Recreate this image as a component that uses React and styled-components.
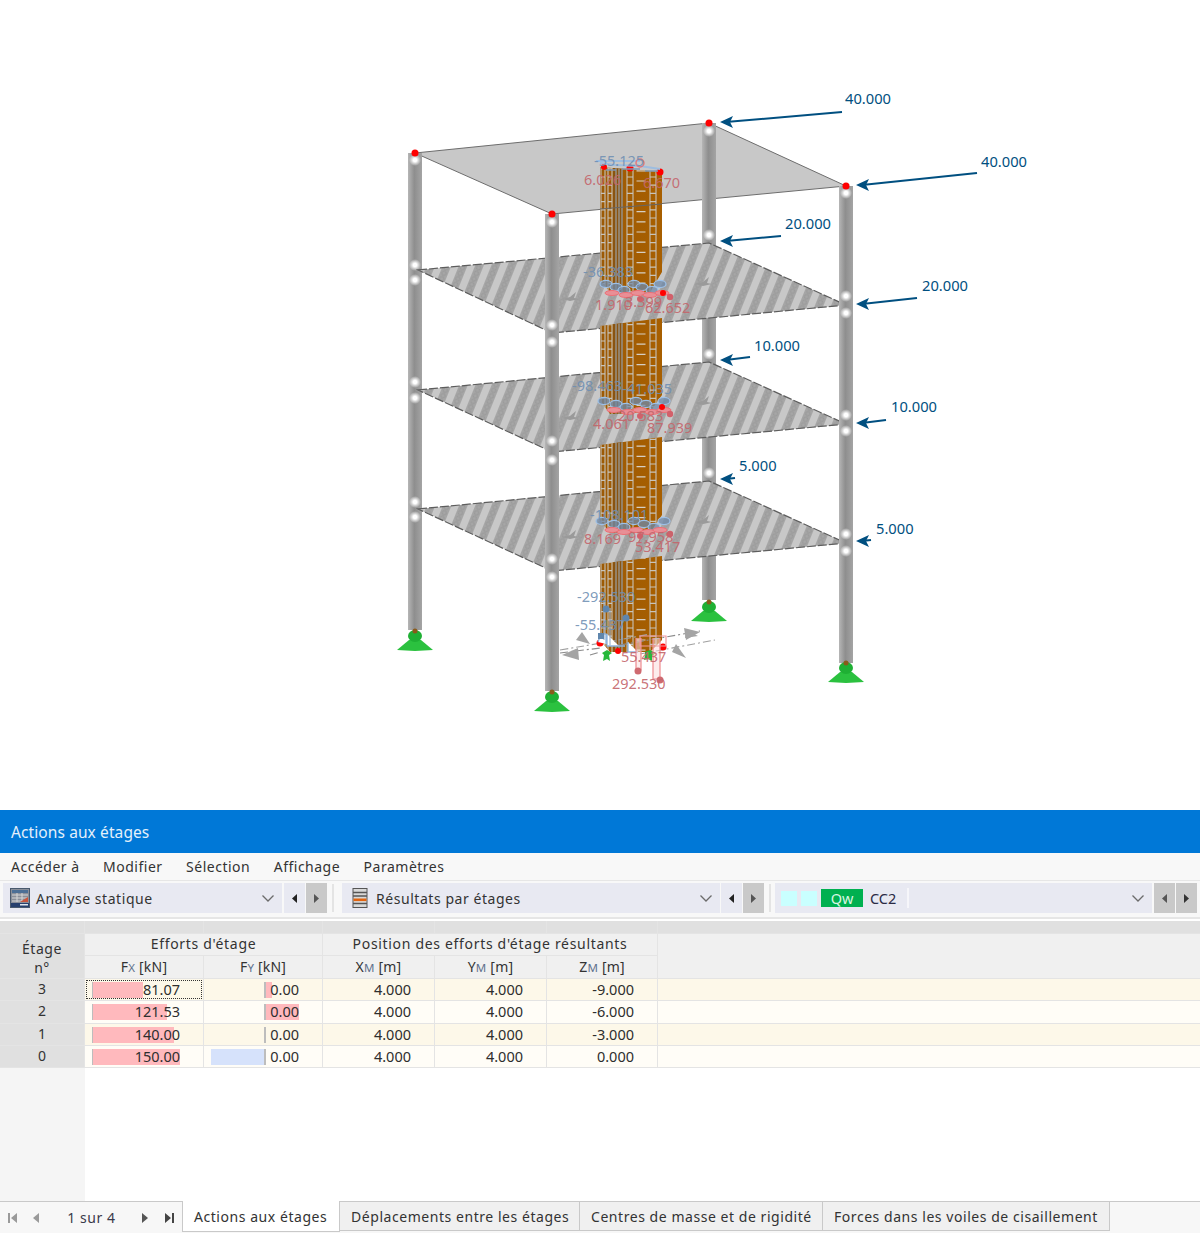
import React from 'react';
import styled, { createGlobalStyle } from 'styled-components';

const Global = createGlobalStyle`
  html, body { margin: 0; padding: 0; background: #fff; }
  #root { width: 1200px; }
`;

const UI = `"Noto Sans", "Open Sans", sans-serif`;

const Page = styled.div`
  width: 1200px; height: 1233px; display: flex; flex-direction: column; overflow: hidden;
  font-family: ${UI}; font-size: 14px; color: #333; background: #fff; letter-spacing: 0.55px;
`;
const Viewport = styled.div` height: 810px; flex: none; letter-spacing: 0; `;
const Drawing = styled.svg` display: block; `;

const TitleBar = styled.div`
  height: 43px; flex: none; background: #0078d7; color: #e4f0fb; display: flex; align-items: center;
  padding-left: 11px; font-size: 15.5px; letter-spacing: 0.1px; box-sizing: border-box;
`;
const MenuBar = styled.div`
  height: 28px; flex: none; background: #f8f8f8; display: flex; align-items: center; gap: 23.5px;
  padding-left: 11px; font-size: 14px; color: #333; border-bottom: 1px solid #e6e6e6; box-sizing: border-box;
  letter-spacing: 0.5px;
`;
const Toolbar = styled.div`
  height: 38px; flex: none; background: #f8f8f8; display: flex; align-items: center; padding: 0 3px 2px 3px;
  box-sizing: border-box; border-bottom: 2px solid #e6e6e6;
`;
const Combo = styled.div`
  width: ${p => p.$w}px; height: 30px; background: #e8e9f2; display: flex; align-items: center;
  padding: 0 7px 0 ${p => p.$pl}px; box-sizing: border-box; gap: ${p => p.$gap}px; flex: none; font-size: 14px;
`;
const ComboLabel = styled.span` flex: 1; white-space: nowrap; `;
const StepButton = styled.div`
  width: 21px; height: 30px; margin-left: ${p => p.$ml}px; background: ${p => (p.$dim ? '#c9c9c9' : '#e8e9f2')};
  display: flex; align-items: center; justify-content: center; flex: none;
`;
const ToolSep = styled.div`
  width: 2px; height: 28px; background: #e4e4e4; margin: 0 ${p => p.$mr}px 0 ${p => p.$ml}px; flex: none;
`;
const Swatch = styled.span` width: 16px; height: 15px; background: #c9ffff; flex: none; `;
const LoadTag = styled.span`
  width: 42px; height: 18px; background: #00b050; color: #d9f6e2; display: flex; align-items: center;
  justify-content: center; font-size: 14.5px; flex: none; letter-spacing: 0;
`;
const LoadCode = styled.span` margin-left: 3px; width: 33px; flex: none; font-size: 14.5px; color: #2b2b45; letter-spacing: 0; `;
const InnerSep = styled.span` width: 2px; height: 20px; background: #f6f6fa; flex: none; `;
const Spacer = styled.span` flex: 1; `;

const TableArea = styled.div`
  flex: 1; display: flex; flex-direction: column; min-height: 0; background: #fff; padding-top: 2px; box-sizing: border-box;
`;
const Grid = styled.div`
  display: grid; flex: none;
  grid-template-columns: 84px 118px 118px 111px 111px 110px 1fr;
  grid-template-rows: 12px 21px 22px repeat(4, 21.33px);
  gap: 1px; background: #e4e4e4; padding-bottom: 1px;
`;
const Strip = styled.div` background: #e0e0e0; `;
const StageHead = styled.div`
  grid-row: span 2; background: #e0e0e0; display: flex; flex-direction: column; align-items: center; justify-content: center;
  line-height: 19px; padding-top: 3px; box-sizing: border-box;
`;
const GroupHead = styled.div`
  grid-column: span ${p => p.$span}; background: #f0f0f0; text-align: center; line-height: 20px; white-space: nowrap; letter-spacing: 0.68px;
`;
const BlankHead = styled.div` grid-row: span 2; background: #f0f0f0; `;
const SubHead = styled.div` background: #f0f0f0; text-align: center; line-height: 22px; white-space: nowrap; letter-spacing: 0.2px; `;
const Sub = styled.span` font-size: 11.5px; color: #5c6f8c; `;
const RowHead = styled.div` background: #e0e0e0; text-align: center; line-height: 20px; letter-spacing: 0; `;
const Cell = styled.div`
  position: relative; background: ${p => (p.$alt ? '#fdf8e9' : '#fffdf7')}; text-align: right; letter-spacing: 0;
  padding-right: 23px; line-height: 21px; color: #2e2e2e; font-size: 14.5px;
  ${p => p.$focus && 'outline: 1.5px dotted #333; outline-offset: -2px;'}
`;
const CellValue = styled.span` position: relative; `;
const Bar = styled.span`
  position: absolute; top: 3px; height: 16px; background: ${p => p.$color};
`;
const BarAxis = styled.span`
  position: absolute; top: 3px; height: 16px; width: 1.5px; background: #bdbdbd;
`;
const Fill = styled.div` flex: 1; display: flex; `;
const FillLeft = styled.div` width: 85px; background: #f5f5f5; `;

const TabBar = styled.div`
  height: 32px; flex: none; display: flex; background: #f7f7f7; border-top: 1px solid #c9c9c9; box-sizing: border-box;
  position: relative;
`;
const Pager = styled.div`
  width: 182px; flex: none; display: flex; align-items: center; padding-left: 7px; box-sizing: border-box; font-size: 14px;
`;
const PagerText = styled.span` width: 103px; text-align: center; margin: 0 -2px 0 0; color: #3a3a4a; `;
const PagerIcon = styled.svg` flex: none; margin-right: ${p => p.$mr || 0}px; `;
const Tab = styled.div`
  height: ${p => (p.$active ? 31 : 29)}px; box-sizing: border-box; padding: 0 11px; white-space: nowrap;
  background: ${p => (p.$active ? '#fff' : '#f0f0f0')}; display: flex; align-items: center;
  border-right: 1px solid #c9c9c9; border-bottom: 1px solid #c9c9c9;
  ${p => p.$active && 'border-left: 1px solid #c9c9c9; margin-top: -1px;'}
  width: ${p => p.$w}px; font-size: 14px; flex: none;
`;

const Chevron = () => (
  <svg width="14" height="9" viewBox="0 0 14 9"><path d="M1.5 1.5 L7 7 L12.5 1.5" fill="none" stroke="#6b6b6b" strokeWidth="1.3" /></svg>
);
const Tri = ({ right, color = '#222' }) => (
  <svg width="7" height="11" viewBox="0 0 7 11"><path d={right ? 'M1 1 L6 5.5 L1 10 Z' : 'M6 1 L1 5.5 L6 10 Z'} fill={color} /></svg>
);
const StaticIcon = () => (
  <svg width="20" height="20" viewBox="0 0 20 20">
    <rect x="0.5" y="0.5" width="19" height="19" fill="#8a8f99" stroke="#4a5a6e" />
    <rect x="2" y="2" width="16" height="3" fill="#4c6f96" />
    <path d="M2 7h16M2 10h16M2 13h16M7 5v9M12 5v9" stroke="#d6d6d6" strokeWidth="1" />
    <path d="M10 14 L18 9 L18 14 Z" fill="#c9553d" />
    <rect x="1" y="15" width="18" height="4" fill="#27406e" />
    <rect x="10" y="16" width="8" height="1.5" fill="#dfe6ee" />
  </svg>
);
const FloorsIcon = () => (
  <svg width="16" height="20" viewBox="0 0 16 20">
    <rect x="1" y="0.5" width="14" height="19" fill="#d8d8d8" stroke="#555" />
    <path d="M1 4.5h14M1 8h14M1 15.5h14" stroke="#555" strokeWidth="1.3" />
    <rect x="1.5" y="10.5" width="13" height="2.6" fill="#e2640f" />
  </svg>
);

const rows = [
  { n: 3, fx: '81.07', w: 50, fy: '0.00', py: 6, by: 0, z: '-9.000' },
  { n: 2, fx: '121.53', w: 74, fy: '0.00', py: 33, by: 0, z: '-6.000' },
  { n: 1, fx: '140.00', w: 81, fy: '0.00', py: 0, by: 0, z: '-3.000' },
  { n: 0, fx: '150.00', w: 87, fy: '0.00', py: 0, by: 54, z: '0.000' },
];

/* ---- structural model drawing ---- */
const plates = [
  { l: 390, r: 424, f: 452, b: 362 },
  { l: 509, r: 543, f: 571, b: 481 },
  { l: 270, r: 305, f: 333, b: 243 },
];
const platePts = (p) => `418,${p.l} 709,${p.b} 846,${p.r} 552,${p.f}`;
const loads = [
  [842, 112, 720, 122, '40.000', 845, 103],
  [977, 173, 856, 185, '40.000', 981, 166],
  [781, 236, 720, 241, '20.000', 785, 228],
  [917, 298, 856, 304, '20.000', 922, 290],
  [750, 357, 720, 360, '10.000', 754, 350],
  [886, 420, 856, 423, '10.000', 891, 411],
  [735, 478, 720, 479, '5.000', 739, 470],
  [871, 540, 856, 541, '5.000', 876, 533],
];
const dotsBehind = [
  [415, 265], [415, 280], [415, 382], [415, 398], [415, 502], [415, 517], [415, 160],
  [709, 235], [709, 250], [709, 354], [709, 369], [709, 473], [709, 488], [709, 131],
];
const dotsFront = [
  [552, 325], [552, 342], [552, 441], [552, 460], [552, 559], [552, 577], [552, 222],
  [846, 296], [846, 313], [846, 415], [846, 431], [846, 534], [846, 551], [846, 193],
];
const redTops = [[415, 153], [552, 214], [709, 123], [846, 186]];
const supports = [[415, 633], [552, 694], [709, 604], [846, 665]];
const ladders = [[601, 605], [608, 612], [627, 633], [650, 656]];
const greyRails = [616, 619, 622];
const coreBands = [
  'M600 167 L662 172 L662 272 L650 292 L610 292 L600 280 Z',
  'M600 326 L662 318 L662 395 L650 412 L610 414 L600 400 Z',
  'M600 445 L662 437 L662 515 L650 533 L610 533 L600 520 Z',
  'M600 564 L662 556 L662 640 L650 652 L610 652 L600 640 Z',
];
const blobs = [
  { y: 289, blue: [-24, -14, -6, 4, 12, 22, 30], red: [-18, -4, 8, 20, 32] },
  { y: 406, blue: [-26, -14, -4, 6, 16, 26, 34], red: [-16, -2, 10, 22, 34] },
  { y: 526, blue: [-28, -16, -6, 4, 14, 24, 34], red: [-18, -6, 6, 18, 30] },
];
const redLabels = [
  ['6.026', 584, 185], ['6.670', 643, 188], ['1.910', 595, 310], ['3.399', 625, 307], ['62.652', 645, 313],
  ['20.583', 618, 421], ['4.061', 593, 429], ['87.939', 647, 433], ['8.169', 584, 544], ['97.958', 628, 542],
  ['53.417', 635, 552], ['55.437', 621, 662], ['292.530', 612, 689],
];
const blueLabels = [
  ['-55.125', 594, 166], ['-36.383', 583, 277], ['-98.463', 572, 391], ['-41.035', 622, 394],
  ['-108.101', 590, 520], ['-292.530', 577, 602], ['-55.437', 575, 630],
];
const ringArrows = [
  'M562 655 L578 648 L579 660 Z', 'M700 632 L684 628 L686 640 Z', 'M672 652 L686 658 L676 644 Z',
  'M576 640 L590 644 L582 632 Z', 'M686 630 L698 636 L685 638 Z',
];
const smudges = [[570, 298], [703, 283], [570, 417], [703, 402], [570, 536], [703, 521]];

const Model = () => (
  <Drawing width="1200" height="810" viewBox="0 0 1200 810">
    <defs>
      <linearGradient id="col" x1="0" x2="1" y1="0" y2="0">
        <stop offset="0" stopColor="#b6b6b6" />
        <stop offset="0.45" stopColor="#8e8e8e" />
        <stop offset="1" stopColor="#a4a4a4" />
      </linearGradient>
      <radialGradient id="glow">
        <stop offset="0.3" stopColor="#fff" />
        <stop offset="1" stopColor="#fff" stopOpacity="0" />
      </radialGradient>
      <pattern id="hatch" width="15" height="6" patternUnits="userSpaceOnUse" patternTransform="rotate(22)">
        <rect width="15" height="6" fill="#c8c8c8" />
        <rect x="0" width="8" height="6" fill="#a6a6a6" />
        <circle cx="4" cy="3" r="2.2" fill="none" stroke="#929292" strokeWidth="0.7" />
      </pattern>
      <linearGradient id="core" x1="0" x2="1" y1="0" y2="0">
        <stop offset="0" stopColor="#9c5a05" />
        <stop offset="1" stopColor="#a85f00" />
      </linearGradient>
      <clipPath id="coreClip">
        {coreBands.map((d) => <path key={d} d={d} />)}
      </clipPath>
    </defs>

    <polygon points="415,153 709,123 846,186 552,214" fill="#c8c8c8" stroke="#6d6d6d" strokeWidth="1" />
    <rect x="408" y="153" width="14" height="477" fill="url(#col)" />
    <rect x="702" y="123" width="14" height="477" fill="url(#col)" />
    {dotsBehind.map(([x, y]) => <circle key={`${x}${y}`} cx={x} cy={y} r="6" fill="url(#glow)" />)}

    {plates.map((p) => (
      <polygon key={p.l} points={platePts(p)} fill="url(#hatch)" stroke="#5d5d5d" strokeWidth="1.2" strokeDasharray="9 2" />
    ))}
    {smudges.map(([x, y]) => (
      <path key={`${x}${y}`} d={`M${x - 8} ${y + 1} L${x} ${y - 1} L${x + 6} ${y - 6} L${x + 4} ${y} L${x + 9} ${y + 1} L${x} ${y + 3} Z`} fill="#9a9a9a" />
    ))}

    <g clipPath="url(#coreClip)">
      <rect x="600" y="160" width="62" height="500" fill="url(#core)" />
      <rect x="613" y="160" width="10" height="500" fill="#8a5410" />
      {ladders.map(([a, b]) => (
        <g key={a} stroke="#c7c3bb">
          <line x1={a} x2={a} y1="160" y2="660" strokeWidth="1.1" />
          <line x1={b} x2={b} y1="160" y2="660" strokeWidth="1.1" />
          <line x1={(a + b) / 2} x2={(a + b) / 2} y1="160" y2="660" strokeWidth={b - a} strokeDasharray="1.2 7" />
        </g>
      ))}
      {greyRails.map((x) => (
        <line key={x} x1={x} x2={x} y1="160" y2="660" stroke="#9fb0c0" strokeWidth="1" />
      ))}
      <line x1="641" x2="641" y1="160" y2="660" stroke="#d5cfc4" strokeWidth="9" strokeDasharray="1.2 9" />
    </g>
    <line x1="600" y1="209" x2="662" y2="204" stroke="#666" strokeWidth="1" />

    {blobs.map((b) => (
      <g key={b.y}>
        {b.blue.map((dx, i) => (
          <ellipse key={dx} cx={630 + dx} cy={b.y - 5 + (i % 3) * 3} rx="6" ry="3.6" fill="#6f8aa9" fillOpacity="0.75" stroke="#9cc0e8" strokeWidth="1.2" />
        ))}
        {b.red.map((dx, i) => (
          <ellipse key={dx} cx={630 + dx} cy={b.y + 4 + (i % 2) * 2} rx="7" ry="2.5" fill="#e88f96" stroke="#ee6f76" strokeWidth="1" />
        ))}
        <circle cx="670" cy={b.y + 8} r="3.2" fill="#d2606a" />
        <circle cx="640" cy={b.y + 10} r="3" fill="#d2606a" />
      </g>
    ))}

    {/* base: support reactions */}
    <path d="M560 653 L600 648 M620 645 L700 631 M590 655 L600 652" stroke="#8b8b8b" strokeWidth="1.2" strokeDasharray="8 3 2 3" fill="none" />
    <path d="M560 650 Q620 640 650 634 M640 654 L715 640" stroke="#a0a0a0" strokeWidth="1.1" strokeDasharray="8 3 2 3" fill="none" />
    {ringArrows.map((d) => <path key={d} d={d} fill="#a4a4a4" />)}
    <path d="M602 653 l5 -3 l5 3 l-3 2 l1 6 l-3 -2 l-4 2 l1 -6z M645 652 l5 -2 l6 3 l-4 3 l0 5 l-4 -2 l-4 1 l1 -5z" fill="#27b83a" />
    <circle cx="600" cy="643" r="3.5" fill="#f00" />
    <circle cx="663" cy="647" r="3.5" fill="#f00" />
    <circle cx="618" cy="651" r="3" fill="#f00" />
    <path d="M598 642 l3 -8 h5 v10 M607 634 v12 h12 M628 642 v10 h10 M617 646 h8" stroke="#8cb2dc" strokeWidth="1.3" fill="#fff" />
    <path d="M604 600 V640 M610 608 V645 M622 620 V644" stroke="#9db4cf" strokeWidth="1.2" fill="none" />
    <circle cx="606" cy="609" r="3.5" fill="#5f86ad" />
    <circle cx="626" cy="618" r="3.5" fill="#5f86ad" />
    <rect x="598" y="633" width="6" height="6" fill="#5f86ad" />
    <path d="M636 638 V670 H641 V638 M653 638 V679 H660 V638" fill="#fbdcdc" fillOpacity="0.55" stroke="#ef8a8f" strokeWidth="1.2" />
    <path d="M640 636 h26 v10 h-26z" fill="none" stroke="#ef9a9f" strokeWidth="1.2" />
    <circle cx="638" cy="671" r="3.5" fill="#cf6a70" />
    <circle cx="660" cy="680" r="3.5" fill="#cf6a70" />

    {/* front columns */}
    <rect x="545" y="214" width="14" height="477" fill="url(#col)" />
    <rect x="839" y="186" width="14" height="477" fill="url(#col)" />
    {dotsFront.map(([x, y]) => <circle key={`${x}${y}`} cx={x} cy={y} r="6" fill="url(#glow)" />)}
    {redTops.map(([x, y]) => <circle key={x} cx={x} cy={y} r="3.5" fill="#f00" />)}
    <circle cx="604" cy="167" r="3" fill="#f00" />
    <circle cx="630" cy="168" r="3.5" fill="#f00" />
    <circle cx="660" cy="172" r="3.5" fill="#f00" />
    <path d="M600 163 L615 165 L640 166 L660 169 M596 161 H640" stroke="#9dbde0" strokeWidth="2" fill="none" />
    <path d="M606 170 H616 M622 169 H640 M645 171 H658" stroke="#7f98b5" strokeWidth="1.5" />
    <circle cx="640" cy="163" r="4" fill="none" stroke="#e27378" strokeWidth="1.4" />
    <circle cx="663" cy="293" r="3" fill="#f00" />
    <circle cx="662" cy="407" r="3" fill="#f00" />

    {supports.map(([x, y]) => (
      <g key={x}>
        <path d={`M${x - 18} ${y + 17} L${x - 6} ${y + 7} H${x + 6} L${x + 18} ${y + 17} L${x} ${y + 18} Z`} fill="#2bc13f" />
        <ellipse cx={x} cy={y + 3} rx="7" ry="6" fill="#1fb034" />
        <circle cx={x} cy={y - 2} r="2.5" fill="#8a5a1a" />
      </g>
    ))}

    {loads.map(([x1, y1, x2, y2, label, tx, ty]) => (
      <g key={`${x1}${y1}`}>
        <line x1={x1} y1={y1} x2={x2 + 6} y2={y2} stroke="#004f80" strokeWidth="2" />
        <path d={`M${x2} ${y2} L${x2 + 13} ${y2 - 6} L${x2 + 10} ${y2} L${x2 + 13} ${y2 + 6} Z`} fill="#004f80" />
        <text x={tx} y={ty + 1} fontFamily={UI} fontSize="14.7" fill="#004f80">{label}</text>
      </g>
    ))}
    {blueLabels.map(([t, x, y]) => (
      <text key={t} x={x} y={y} fontFamily={UI} fontSize="14.5" fill="#6f8fb3" fillOpacity="0.9">{t}</text>
    ))}
    {redLabels.map(([t, x, y]) => (
      <text key={t} x={x} y={y} fontFamily={UI} fontSize="14.5" fill="#c4666c" fillOpacity="0.92">{t}</text>
    ))}
  </Drawing>
);

const First = () => (
  <PagerIcon width="11" height="10" viewBox="0 0 11 10" $mr="14"><path d="M1 0h2v10H1z M10 0v10L4 5z" fill="#9a9a9a" /></PagerIcon>
);
const Prev = () => (
  <PagerIcon width="8" height="10" viewBox="0 0 8 10"><path d="M7 0v10L1 5z" fill="#9a9a9a" /></PagerIcon>
);
const Next = () => (
  <PagerIcon width="8" height="10" viewBox="0 0 8 10" $mr="15"><path d="M1 0v10l6-5z" fill="#555" /></PagerIcon>
);
const Last = () => (
  <PagerIcon width="11" height="10" viewBox="0 0 11 10"><path d="M1 0v10l6-5z M8 0h2v10H8z" fill="#444" /></PagerIcon>
);

export default function App() {
  return (
    <Page>
      <Global />
      <Viewport><Model /></Viewport>
      <TitleBar>Actions aux étages</TitleBar>
      <MenuBar>
        <span>Accéder à</span><span>Modifier</span><span>Sélection</span><span>Affichage</span><span>Paramètres</span>
      </MenuBar>
      <Toolbar>
        <Combo $w={279} $pl={7} $gap={6}>
          <StaticIcon /><ComboLabel>Analyse statique</ComboLabel><Chevron />
        </Combo>
        <StepButton $ml={2}><Tri /></StepButton>
        <StepButton $ml={1} $dim><Tri right color="#555" /></StepButton>
        <ToolSep $ml={5} $mr={8} />
        <Combo $w={378} $pl={10} $gap={8}>
          <FloorsIcon /><ComboLabel>Résultats par étages</ComboLabel><Chevron />
        </Combo>
        <StepButton $ml={1}><Tri /></StepButton>
        <StepButton $ml={1} $dim><Tri right color="#555" /></StepButton>
        <ToolSep $ml={5} $mr={4} />
        <Combo $w={377} $pl={6} $gap={4}>
          <Swatch /><Swatch /><LoadTag>Qw</LoadTag><LoadCode>CC2</LoadCode>
          <InnerSep /><Spacer /><Chevron />
        </Combo>
        <StepButton $ml={2} $dim><Tri color="#555" /></StepButton>
        <StepButton $ml={1} $dim><Tri right color="#333" /></StepButton>
      </Toolbar>
      <TableArea>
        <Grid>
          {Array.from({ length: 7 }, (_, i) => <Strip key={i} />)}
          <StageHead><span>Étage</span><span>n°</span></StageHead>
          <GroupHead $span={2}>Efforts d'étage</GroupHead>
          <GroupHead $span={3}>Position des efforts d'étage résultants</GroupHead>
          <BlankHead />
          <SubHead>F<Sub>X</Sub> [kN]</SubHead>
          <SubHead>F<Sub>Y</Sub> [kN]</SubHead>
          <SubHead>X<Sub>M</Sub> [m]</SubHead>
          <SubHead>Y<Sub>M</Sub> [m]</SubHead>
          <SubHead>Z<Sub>M</Sub> [m]</SubHead>
          {rows.map((r, i) => {
            const alt = i % 2 === 0;
            return (
              <React.Fragment key={r.n}>
                <RowHead>{r.n}</RowHead>
                <Cell $alt={alt} $focus={i === 0}>
                  <BarAxis style={{ left: 7 }} />
                  <Bar $color="#ffb9bd" style={{ left: 8, width: r.w }} />
                  <CellValue>{r.fx}</CellValue>
                </Cell>
                <Cell $alt={alt}>
                  {r.by > 0 && <Bar $color="#d6e2fb" style={{ left: 61 - r.by, width: r.by }} />}
                  {r.py > 0 && <Bar $color="#ffb9bd" style={{ left: 62, width: r.py }} />}
                  <BarAxis style={{ left: 60 }} />
                  <CellValue>{r.fy}</CellValue>
                </Cell>
                <Cell $alt={alt}>4.000</Cell>
                <Cell $alt={alt}>4.000</Cell>
                <Cell $alt={alt}>{r.z}</Cell>
                <Cell $alt={alt} />
              </React.Fragment>
            );
          })}
        </Grid>
        <Fill><FillLeft /></Fill>
      </TableArea>
      <TabBar>
        <Pager>
          <First /><Prev /><PagerText>1 sur 4</PagerText><Next /><Last />
        </Pager>
        <Tab $active $w={158}>Actions aux étages</Tab>
        <Tab $w={240}>Déplacements entre les étages</Tab>
        <Tab $w={243}>Centres de masse et de rigidité</Tab>
        <Tab $w={287}>Forces dans les voiles de cisaillement</Tab>
      </TabBar>
    </Page>
  );
}
